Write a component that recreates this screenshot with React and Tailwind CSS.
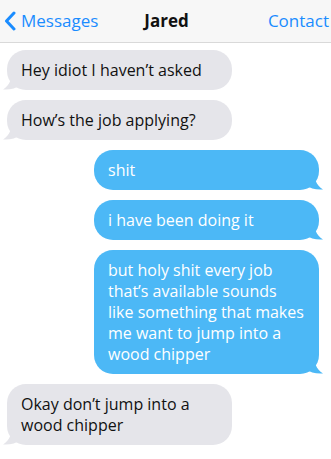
import React from 'react';

const messages = [
  { from: 'them', text: 'Hey idiot I haven’t asked' },
  { from: 'them', text: 'How’s the job applying?' },
  { from: 'me', text: 'shit' },
  { from: 'me', text: 'i have been doing it' },
  { from: 'me', text: 'but holy shit every job that’s available sounds like something that makes me want to jump into a wood chipper' },
  { from: 'them', text: 'Okay don’t jump into a wood chipper' },
];

function Tail({ side, color }) {
  if (side === 'left') {
    return (
      <svg className="absolute -left-[5px] bottom-0" width="20" height="20" viewBox="0 0 20 20">
        <path d="M20 0 L9 0 C 10 9, 8 15, 1 19.5 C 8 20, 14 18.5, 18 15 L20 15 Z" fill={color} />
      </svg>
    );
  }
  return (
    <svg className="absolute -right-[5px] bottom-0" width="20" height="20" viewBox="0 0 20 20">
      <path d="M0 0 L11 0 C 10 9, 12 15, 19 19.5 C 12 20, 6 18.5, 2 15 L0 15 Z" fill={color} />
    </svg>
  );
}

function Bubble({ from, text }) {
  const mine = from === 'me';
  return (
    <div className={`flex ${mine ? 'justify-end pr-3' : 'justify-start pl-[7px]'}`}>
      <div
        className={`relative w-[225px] rounded-[19px] px-[14px] pt-[10px] pb-[9px] text-[16px] leading-[21px] ${
          mine ? 'bg-[#4cb8f6] text-white' : 'bg-[#e5e5ea] text-[#111]'
        }`}
      >
        <span className="relative z-10">{text}</span>
        <Tail side={mine ? 'right' : 'left'} color={mine ? '#4cb8f6' : '#e5e5ea'} />
      </div>
    </div>
  );
}

export default function App() {
  return (
    <div className="w-[331px] h-[459px] bg-white overflow-hidden" style={{ fontFamily: '"Open Sans", sans-serif' }}>
      <header className="h-[43px] bg-[#f7f7f7] border-b border-[#d9d9d9] flex items-center justify-between pl-[4px] pr-[2px] text-[17px]">
        <a className="flex items-center text-[#1a8cff] w-[110px]">
          <svg width="12" height="20" viewBox="0 0 12 20" className="mr-[5px]">
            <path d="M10 2 L2.5 10 L10 18" stroke="#1a8cff" strokeWidth="3" fill="none" strokeLinecap="round" strokeLinejoin="round" />
          </svg>
          Messages
        </a>
        <span className="font-bold text-[#111]">Jared</span>
        <a className="text-[#1a8cff] w-[110px] text-right">Contact</a>
      </header>
      <div className="flex flex-col gap-[10px] pt-[7px]">
        {messages.map((m, i) => (
          <Bubble key={i} {...m} />
        ))}
      </div>
    </div>
  );
}
